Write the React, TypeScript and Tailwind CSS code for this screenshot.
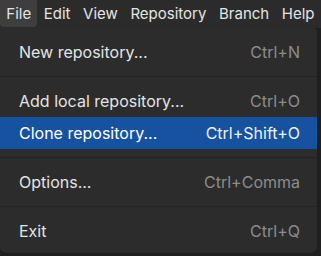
const menus = ["File", "Edit", "View", "Repository", "Branch", "Help"];

type Item = { label: string; shortcut: string; active?: boolean } | "sep";

const items: Item[] = [
  { label: "New repository...", shortcut: "Ctrl+N" },
  "sep",
  { label: "Add local repository...", shortcut: "Ctrl+O" },
  { label: "Clone repository...", shortcut: "Ctrl+Shift+O", active: true },
  "sep",
  { label: "Options...", shortcut: "Ctrl+Comma" },
  "sep",
  { label: "Exit", shortcut: "Ctrl+Q" },
];

export default function App() {
  return (
    <div
      className="h-[256px] w-[321px] overflow-hidden bg-[#1f1f1f] text-[16px] text-[#e4e4e4]"
      style={{ fontFamily: "Inter, 'Noto Sans', sans-serif" }}
    >
      <div className="flex h-[28px] bg-[#2b2b2b] text-[15px]">
        {menus.map((m, i) => (
          <div
            key={m}
            className={
              "flex h-[27px] items-center rounded-b-[4px] px-[6.3px] leading-none " +
              (i === 0 ? "bg-[#3e3e3e]" : "")
            }
          >
            {m}
          </div>
        ))}
      </div>

      <div className="w-[317px] rounded-b-[7px] rounded-tr-[4px] bg-[#2c2c2c] pb-[6px] pt-[8px]">
        {items.map((it, i) =>
          it === "sep" ? (
            <div key={i} className="my-[8px] h-px bg-[#232323]" />
          ) : (
            <div
              key={i}
              className={
                "flex h-[32px] items-center justify-between pl-[19px] pr-[17px] " +
                (it.active ? "bg-[#1752a0] text-white" : "")
              }
            >
              <span>{it.label}</span>
              <span className={it.active ? "text-[#eef2fa]" : "text-[#8c8c8c]"}>{it.shortcut}</span>
            </div>
          )
        )}
      </div>
    </div>
  );
}
